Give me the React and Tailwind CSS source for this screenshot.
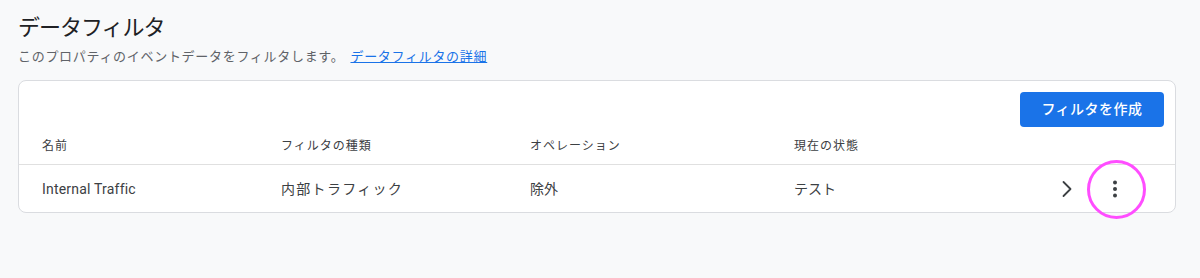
import React from 'react';

const font = { fontFamily: 'Roboto, "Noto Sans CJK JP", sans-serif' };

const columns = ['名前', 'フィルタの種類', 'オペレーション', '現在の状態'];

const rows = [
    { name: 'Internal Traffic', type: '内部トラフィック', op: '除外', state: 'テスト' },
];

function ChevronRight() {
    return (
        <svg width="24" height="24" viewBox="0 0 24 24" fill="none" stroke="#3c4043" strokeWidth="1.8" strokeLinecap="round" strokeLinejoin="round">
            <polyline points="8.5,5 15.5,12 8.5,19" />
        </svg>
    );
}

function MoreVert() {
    return (
        <svg width="24" height="24" viewBox="0 0 24 24" fill="#3c4043">
            <circle cx="12" cy="5.5" r="2" />
            <circle cx="12" cy="12" r="2" />
            <circle cx="12" cy="18.5" r="2" />
        </svg>
    );
}

export default function App() {
    return (
        <div className="min-h-[278px] w-full bg-[#f8f9fa] px-[18px] pt-[10px]" style={font}>
            <h1 className="text-[22px] leading-[36px] tracking-[-1px] text-[#202124] font-normal">データフィルタ</h1>
            <p className="mt-px text-[13px] leading-[20px] tracking-[0.7px] text-[#5f6368]">
                このプロパティのイベントデータをフィルタします。
                <a href="#" className="ml-[6px] text-[#1a73e8] underline">データフィルタの詳細</a>
            </p>

            <div className="mt-[13px] w-[1158px] rounded-[8px] border border-[#dadce0] bg-white">
                <div className="flex justify-end pt-[11px] pr-[11px]">
                    <button className="h-[35px] w-[144px] rounded-[4px] bg-[#1a73e8] text-[14px] font-medium tracking-[0.5px] text-white">
                        フィルタを作成
                    </button>
                </div>

                <div className="grid h-[38px] grid-cols-[239px_249px_264px_1fr] items-center border-b border-[#e0e0e0] pl-[23px] text-[12px] tracking-[1px] text-[#3c4043]">
                    {columns.map((c) => (
                        <div key={c}>{c}</div>
                    ))}
                </div>

                {rows.map((r) => (
                    <div key={r.name} className="relative grid h-[47px] grid-cols-[239px_249px_264px_1fr] items-center pl-[23px] text-[14px] text-[#3c4043]">
                        <div className="tracking-[0.2px]">{r.name}</div>
                        <div className="tracking-[1.3px]">{r.type}</div>
                        <div>{r.op}</div>
                        <div className="flex items-center justify-between">
                            <span>{r.state}</span>
                            <div className="flex items-center pr-[36px]">
                                <div className="flex h-[48px] w-[48px] items-center justify-center">
                                    <ChevronRight />
                                </div>
                                <div className="flex h-[48px] w-[48px] items-center justify-center">
                                    <MoreVert />
                                </div>
                            </div>
                        </div>
                        <div className="pointer-events-none absolute left-[1068px] top-[-5px] h-[59px] w-[59px] rounded-full border-[3px] border-[#ff4dff]" />
                    </div>
                ))}
            </div>
        </div>
    );
}
